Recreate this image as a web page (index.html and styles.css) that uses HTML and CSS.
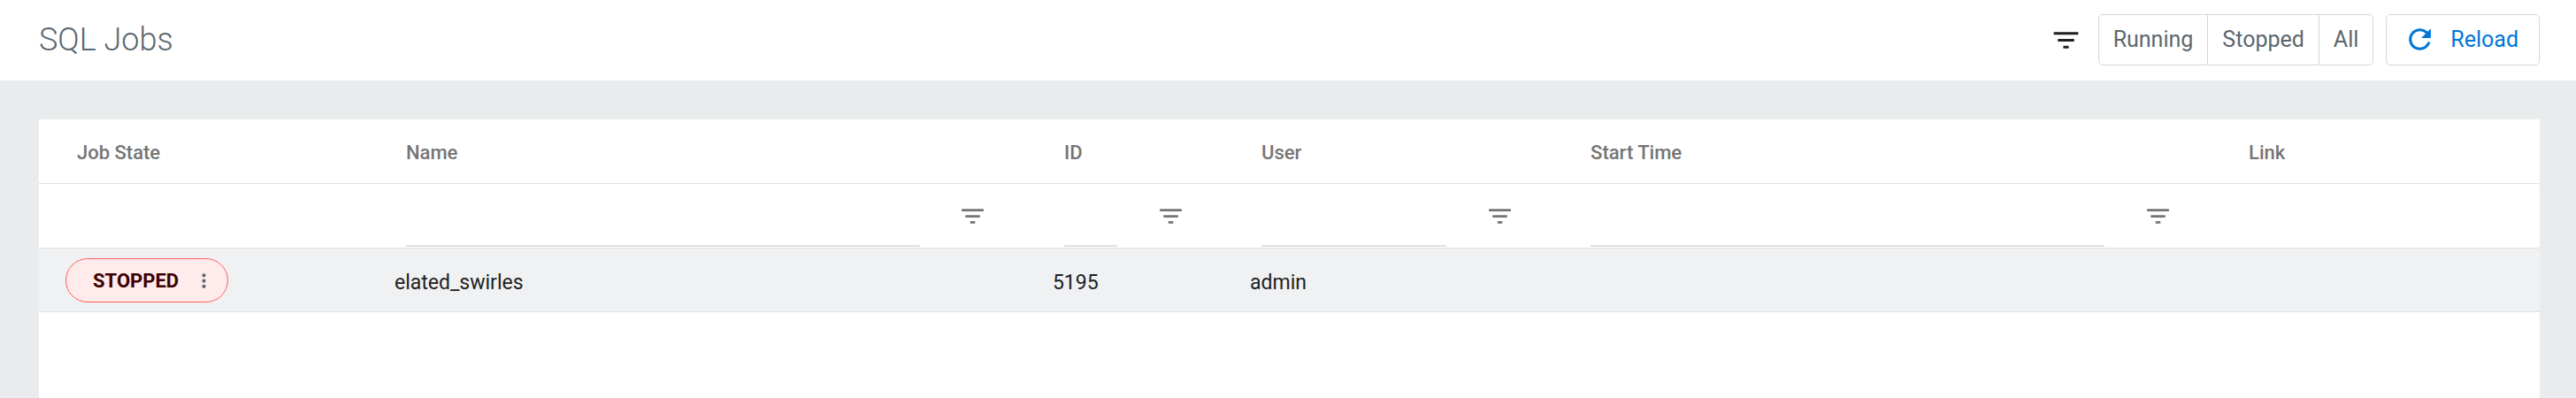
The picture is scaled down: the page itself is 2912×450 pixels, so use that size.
FILE: index.html
```html
<!DOCTYPE html>
<html lang="en">
<head>
  <meta charset="UTF-8" />
  <meta name="viewport" content="width=device-width, initial-scale=1.0" />
  <title>SQL Jobs</title>
  <link rel="stylesheet" href="styles.css">
</head>
<body>
  <svg class="sprite" aria-hidden="true">
    <symbol id="icon-filter" viewBox="0 0 24 24">
      <path d="M10 18h4v-2h-4v2zM3 6v2h18V6H3zm3 7h12v-2H6v2z"/>
    </symbol>
    <symbol id="icon-reload" viewBox="0 0 24 24">
      <path d="M17.65 6.35C16.2 4.9 14.21 4 12 4c-4.42 0-7.99 3.58-7.99 8s3.57 8 7.99 8c3.73 0 6.84-2.55 7.73-6h-2.08c-.82 2.33-3.04 4-5.65 4-3.31 0-6-2.69-6-6s2.69-6 6-6c1.66 0 3.14.69 4.22 1.78L13 11h7V4l-2.35 2.35z"/>
    </symbol>
    <symbol id="icon-more" viewBox="0 0 24 24">
      <path d="M12 8c1.1 0 2-.9 2-2s-.9-2-2-2-2 .9-2 2 .9 2 2 2zm0 2c-1.1 0-2 .9-2 2s.9 2 2 2 2-.9 2-2-.9-2-2-2zm0 6c-1.1 0-2 .9-2 2s.9 2 2 2 2-.9 2-2-.9-2-2-2z"/>
    </symbol>
  </svg>

  <header class="toolbar">
    <h1>SQL Jobs</h1>
    <div class="actions">
      <div class="state-filter">
        <svg class="icon icon-toolbar"><use href="#icon-filter"/></svg>
        <div class="toggle-group">
          <button type="button">Running</button>
          <button type="button">Stopped</button>
          <button type="button">All</button>
        </div>
      </div>
      <button type="button" class="reload">
        <svg class="icon icon-toolbar"><use href="#icon-reload"/></svg>
        Reload
      </button>
    </div>
  </header>

  <main class="content">
    <table class="jobs">
      <colgroup>
        <col class="col-small">
        <col class="col-large">
        <col class="col-id">
        <col class="col-small">
        <col class="col-large">
        <col class="col-small">
      </colgroup>
      <thead>
        <tr>
          <th>Job State</th>
          <th>Name</th>
          <th>ID</th>
          <th>User</th>
          <th>Start Time</th>
          <th>Link</th>
        </tr>
        <tr class="filters">
          <td></td>
          <td>
            <div class="filter">
              <input type="text" aria-label="Filter by name" />
              <button type="button" aria-label="Name filter options"><svg class="icon icon-filter"><use href="#icon-filter"/></svg></button>
            </div>
          </td>
          <td>
            <div class="filter">
              <input type="text" aria-label="Filter by ID" />
              <button type="button" aria-label="ID filter options"><svg class="icon icon-filter"><use href="#icon-filter"/></svg></button>
            </div>
          </td>
          <td>
            <div class="filter">
              <input type="text" aria-label="Filter by user" />
              <button type="button" aria-label="User filter options"><svg class="icon icon-filter"><use href="#icon-filter"/></svg></button>
            </div>
          </td>
          <td>
            <div class="filter">
              <input type="text" aria-label="Filter by start time" />
              <button type="button" aria-label="Start time filter options"><svg class="icon icon-filter"><use href="#icon-filter"/></svg></button>
            </div>
          </td>
          <td></td>
        </tr>
      </thead>
      <tbody>
        <tr>
          <td class="state-cell">
            <button type="button" class="state stopped">
              STOPPED
              <svg class="icon icon-more"><use href="#icon-more"/></svg>
            </button>
          </td>
          <td>elated_swirles</td>
          <td>5195</td>
          <td>admin</td>
          <td></td>
          <td></td>
        </tr>
      </tbody>
    </table>
  </main>
</body>
</html>
```

FILE: styles.css
```css
* {
  margin: 0;
  padding: 0;
  box-sizing: border-box;
}
body {
  display: flex;
  flex-direction: column;
  min-height: 100vh;
  font-family: Roboto, sans-serif;
  font-size: 23px;
  color: #212121;
  background: #e9ebec;
}
button, input {
  font: inherit;
  color: inherit;
  border: none;
  background: none;
}
button {
  cursor: pointer;
}
.sprite {
  display: none;
}
.icon {
  display: block;
  fill: currentColor;
}
.icon-toolbar {
  width: 37px;
  height: 37px;
}
.icon-filter {
  width: 33px;
  height: 33px;
}
.icon-more {
  width: 25px;
  height: 25px;
  color: #5b6770;
}

/* toolbar */
.toolbar {
  display: flex;
  align-items: center;
  justify-content: space-between;
  padding: 16px 41px 17px 44px;
  background: #fff;
  border-bottom: 1px solid #e3e6e8;
}
h1 {
  font-size: 36px;
  font-weight: 300;
  line-height: 40px;
  color: #5b6770;
}
.actions, .state-filter {
  display: flex;
  align-items: center;
  gap: 14px;
}
.state-filter {
  gap: 18px;
}
.toggle-group {
  display: flex;
  border: 1px solid #d5d7da;
  border-radius: 5px;
  overflow: hidden;
}
.toggle-group button {
  height: 56px;
  padding: 0 16px 2px;
  font-size: 25px;
  color: #5b6770;
}
.toggle-group button + button {
  border-left: 1px solid #d5d7da;
}
.reload {
  display: flex;
  align-items: center;
  gap: 16px;
  height: 58px;
  padding: 0 23px 2px 19px;
  font-size: 25px;
  color: #0076d6;
  border: 1px solid #d5d7da;
  border-radius: 5px;
}

/* jobs table */
.content {
  flex: 1;
  margin: 43px 41px 0 44px;
  background: #fff;
}
.jobs {
  width: 100%;
  table-layout: fixed;
  border-collapse: separate;
  border-spacing: 0;
}
.col-small {
  width: 10%;
}
.col-large {
  width: 20%;
}
.col-id {
  width: 6%;
}
.jobs th, .jobs td {
  height: 73px;
  text-align: left;
  vertical-align: middle;
  border-bottom: 1px solid #e0e0e0;
}
.jobs th {
  padding: 2px 0 0 43px;
  font-size: 22px;
  font-weight: 500;
  color: #757575;
}
.jobs .filters td {
  padding-left: 43px;
}
.filter {
  display: flex;
  align-items: center;
  height: 72px;
  color: #757575;
}
.filter input {
  flex: 1;
  min-width: 0;
  height: 70px;
  border-bottom: 2px solid #e0e0e0;
}
.filter button {
  display: flex;
  justify-content: center;
  width: 120px;
}
.jobs tbody td {
  height: 72px;
  padding: 5px 0 0 30px;
  background: #f0f1f3;
}
.jobs tbody .state-cell {
  padding-top: 1px;
}
.state {
  display: flex;
  align-items: center;
  gap: 16px;
  height: 50px;
  padding: 0 14px 0 30px;
  font-size: 22px;
  font-weight: 700;
  border: 1px solid #ff5f5f;
  border-radius: 25px;
}
.stopped {
  color: #3d0000;
  background: #ffebeb;
}
```
